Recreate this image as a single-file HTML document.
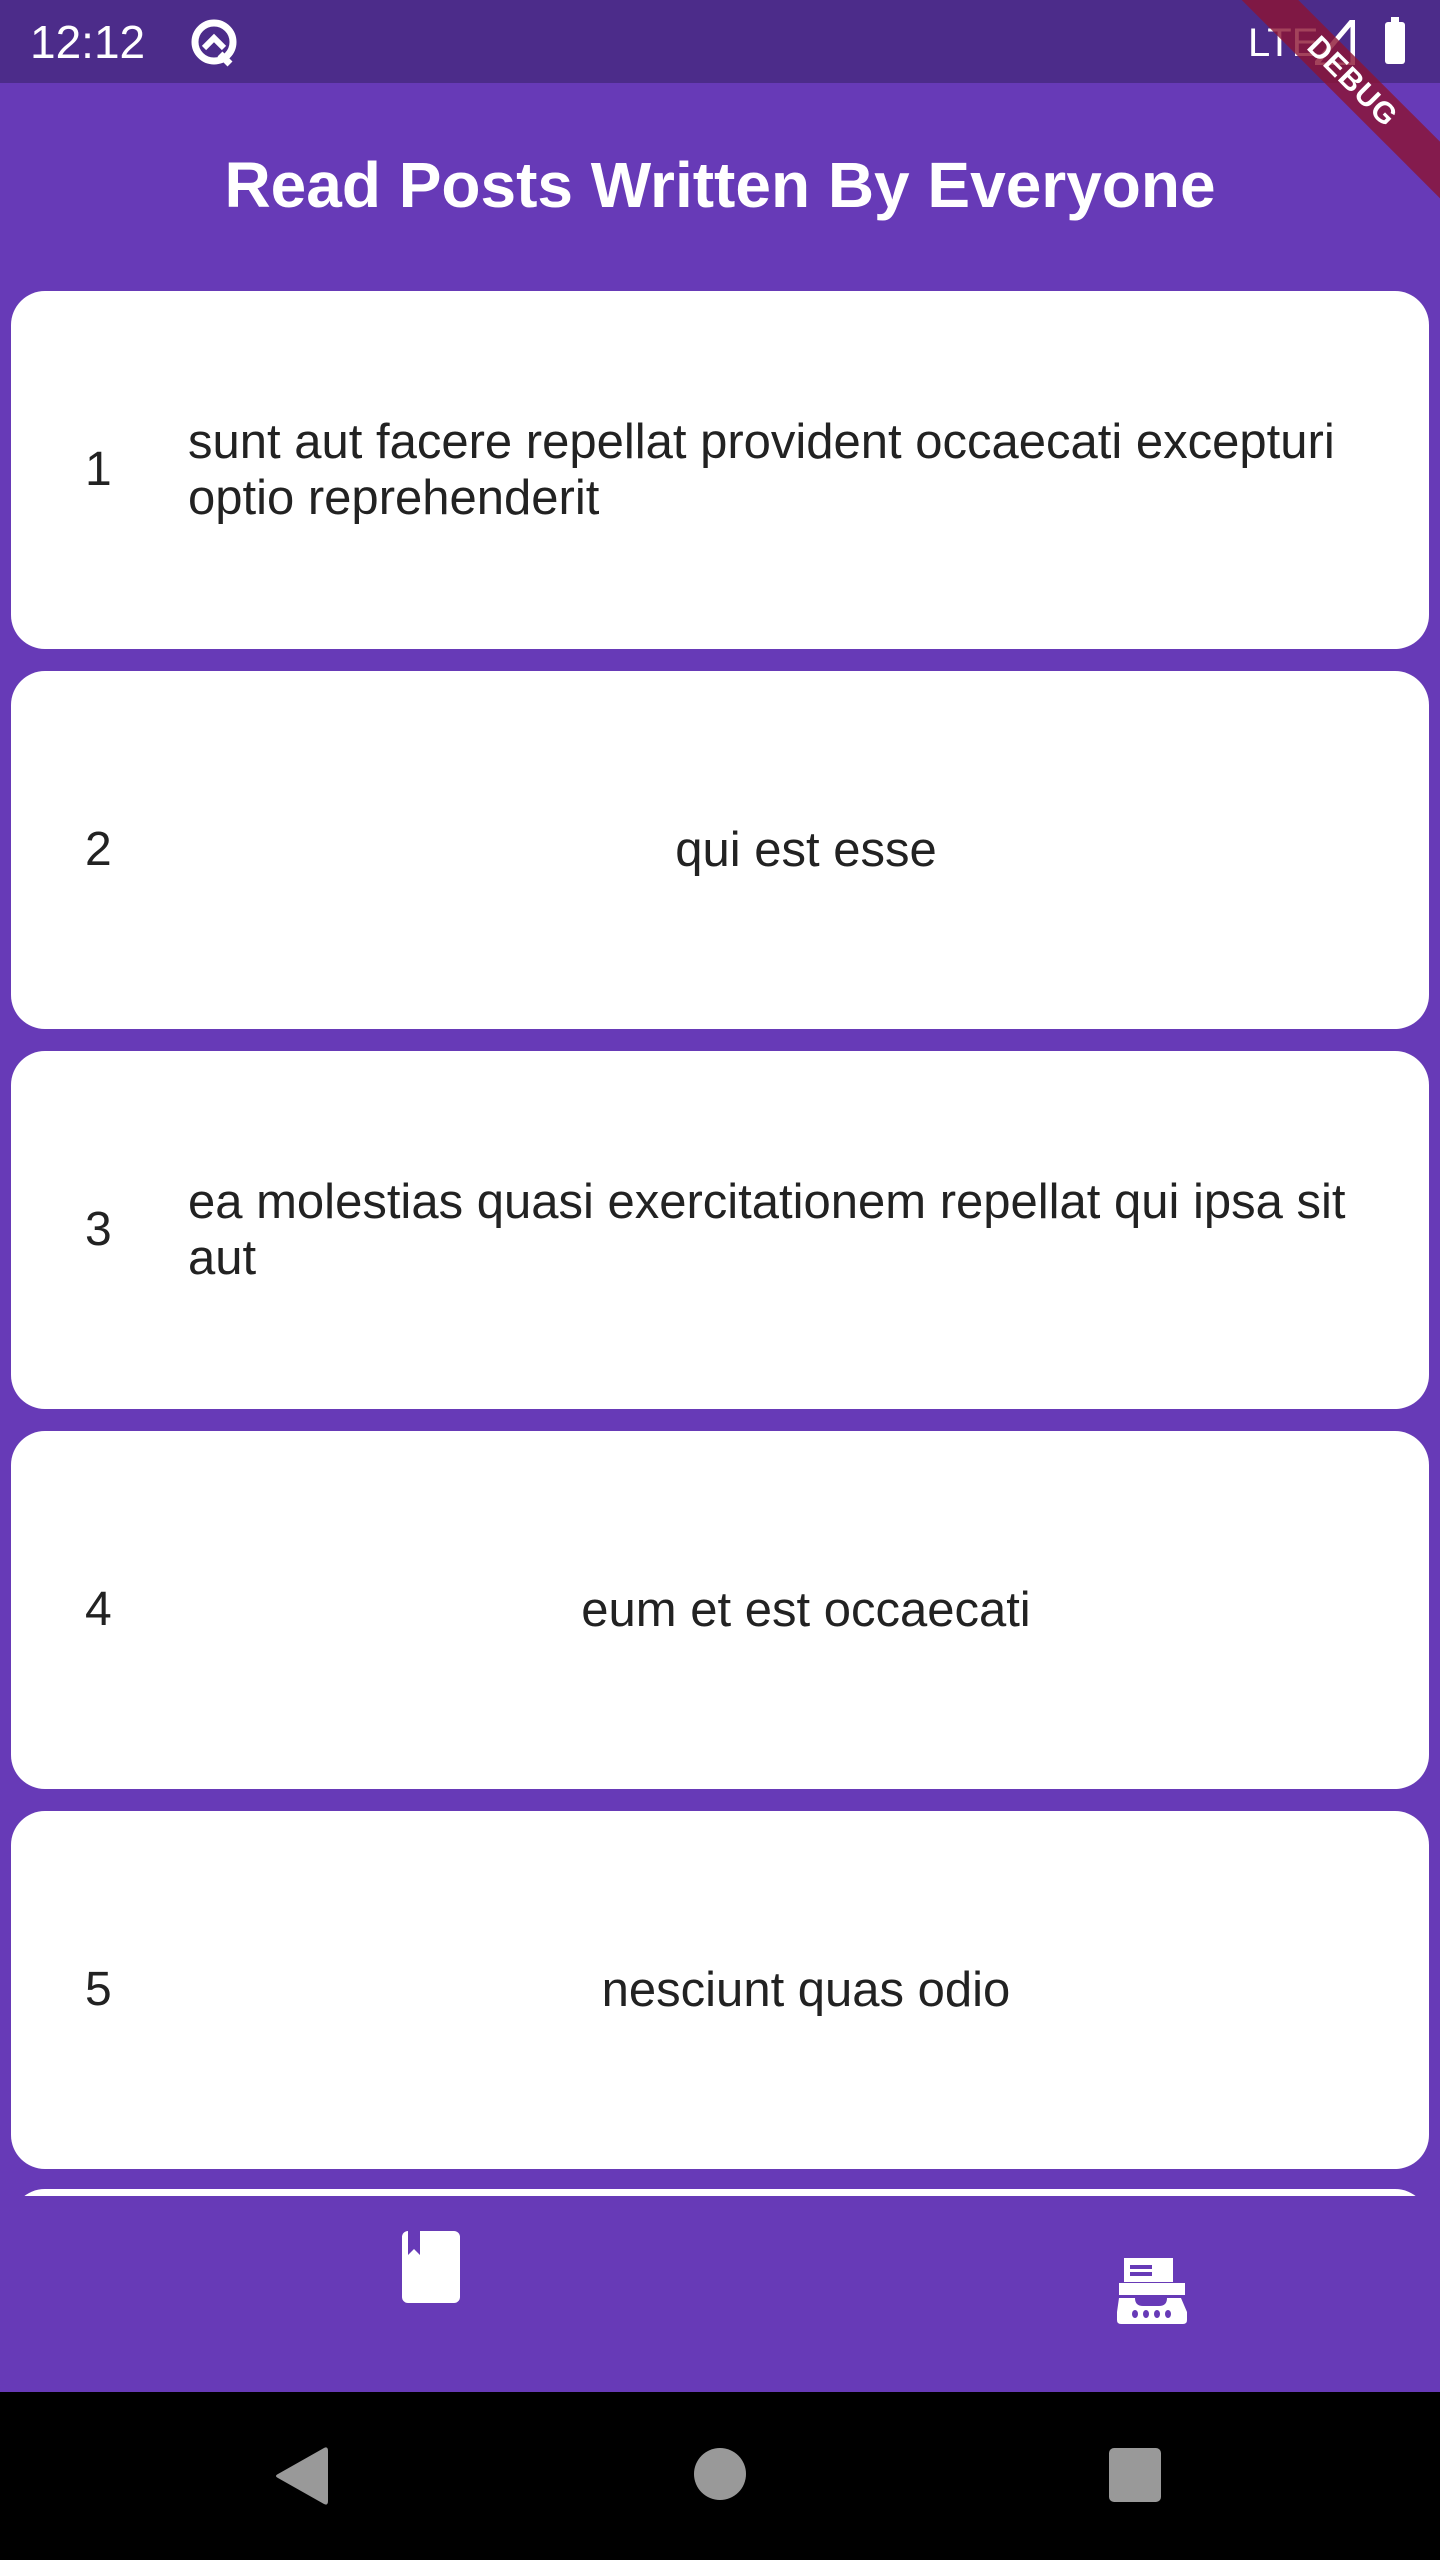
<!DOCTYPE html>
<html><head><meta charset="utf-8"><style>
html,body{margin:0;padding:0}
body{width:1440px;height:2560px;position:relative;overflow:hidden;background:#673ab7;font-family:"Liberation Sans",sans-serif}
.status{position:absolute;left:0;top:0;width:1440px;height:83px;background:#4c2c8a;color:#fff}
.appbar{position:absolute;left:0;top:83px;width:1440px;height:207px;background:#673ab7}
.title{position:absolute;left:0;width:1440px;top:140px;text-align:center;color:#fff;font-size:64px;font-weight:bold;line-height:90px}
.card{position:absolute;left:11px;width:1418px;height:358px;background:#fff;border-radius:34px}
.num{position:absolute;left:74px;top:0;height:358px;line-height:358px;font-size:48px;color:#222}
.txt{position:absolute;left:177px;right:5px;top:0;height:358px;display:flex;align-items:center;font-size:49px;color:#222;line-height:56px;white-space:nowrap}
.txt.c{justify-content:center}
.nav{position:absolute;left:0;top:2196px;width:1440px;height:196px;background:#673ab7}
.sys{position:absolute;left:0;top:2392px;width:1440px;height:168px;background:#000}
</style></head><body>
<div class="appbar"></div>
<div class="title">Read Posts Written By Everyone</div>

<div class="card" style="top:291px"><div class="num">1</div><div class="txt">sunt aut facere repellat provident occaecati excepturi<br>optio reprehenderit</div></div>
<div class="card" style="top:671px"><div class="num">2</div><div class="txt c">qui est esse</div></div>
<div class="card" style="top:1051px"><div class="num">3</div><div class="txt">ea molestias quasi exercitationem repellat qui ipsa sit<br>aut</div></div>
<div class="card" style="top:1431px"><div class="num">4</div><div class="txt c">eum et est occaecati</div></div>
<div class="card" style="top:1811px"><div class="num">5</div><div class="txt c">nesciunt quas odio</div></div>
<div class="card" style="top:2189px"></div>

<div class="nav">
<svg style="position:absolute;left:402px;top:35px" width="58" height="72" viewBox="0 0 58 72"><path d="M6 0H52a6 6 0 0 1 6 6V66a6 6 0 0 1-6 6H6a6 6 0 0 1-6-6V6a6 6 0 0 1 6-6Z M6 0V24L12 18L18 24V0Z" fill="#fff" fill-rule="evenodd"/></svg>
<svg style="position:absolute;left:1115px;top:62px" width="74" height="66" viewBox="0 0 74 66"><path d="M9 0H58V24H9Z" fill="#fff"/><rect x="15" y="7" width="22" height="4" fill="#673ab7"/><rect x="15" y="14" width="22" height="4" fill="#673ab7"/><rect x="4" y="25" width="66" height="12" fill="#fff"/><path d="M4 40H20Q20 48 28 48H44Q52 48 52 40H66L72 54V62Q72 66 68 66H6Q2 66 2 62V54Z" fill="#fff"/><g fill="#673ab7"><ellipse cx="20" cy="56" rx="3" ry="4"/><ellipse cx="31" cy="56" rx="3" ry="4"/><ellipse cx="42" cy="56" rx="3" ry="4"/><ellipse cx="53" cy="56" rx="3" ry="4"/></g></svg>
</div>

<div class="sys">
<svg style="position:absolute;left:274px;top:54px" width="56" height="60" viewBox="0 0 56 60"><path d="M50 2Q54 0 54 5V55Q54 60 50 58L4 32Q0 30 4 28Z" fill="#999"/></svg>
<div style="position:absolute;left:694px;top:56px;width:52px;height:52px;border-radius:50%;background:#999"></div>
<div style="position:absolute;left:1109px;top:56px;width:52px;height:54px;border-radius:5px;background:#999"></div>
</div>

<div class="status">
<div style="position:absolute;left:30px;top:14px;font-size:46px;line-height:56px">12:12</div>
<svg style="position:absolute;left:190px;top:18px" width="50" height="50" viewBox="0 0 50 50"><circle cx="24" cy="24" r="19" fill="none" stroke="#fff" stroke-width="7"/><path d="M14 30L24 20L34 30" fill="none" stroke="#fff" stroke-width="6"/><path d="M30 36L40 46" stroke="#fff" stroke-width="7"/></svg>
<div style="position:absolute;left:1248px;top:18px;font-size:40px;line-height:50px">LTE</div>
<svg style="position:absolute;left:1315px;top:20px" width="40" height="45" viewBox="0 0 40 45"><path d="M38 0V45H0Z" fill="none" stroke="#fff" stroke-width="5"/></svg>
<div style="position:absolute;left:1385px;top:22px;width:20px;height:42px;background:#fff;border-radius:3px"></div>
<div style="position:absolute;left:1391px;top:17px;width:8px;height:6px;background:#fff"></div>
</div>

<div style="position:absolute;left:1202px;top:62px;width:300px;height:40px;background:rgba(140,20,50,.8);transform:rotate(45deg);transform-origin:center;color:#fff;font-weight:bold;font-size:30px;line-height:40px;text-align:center;letter-spacing:1px">DEBUG</div>
</body></html>
